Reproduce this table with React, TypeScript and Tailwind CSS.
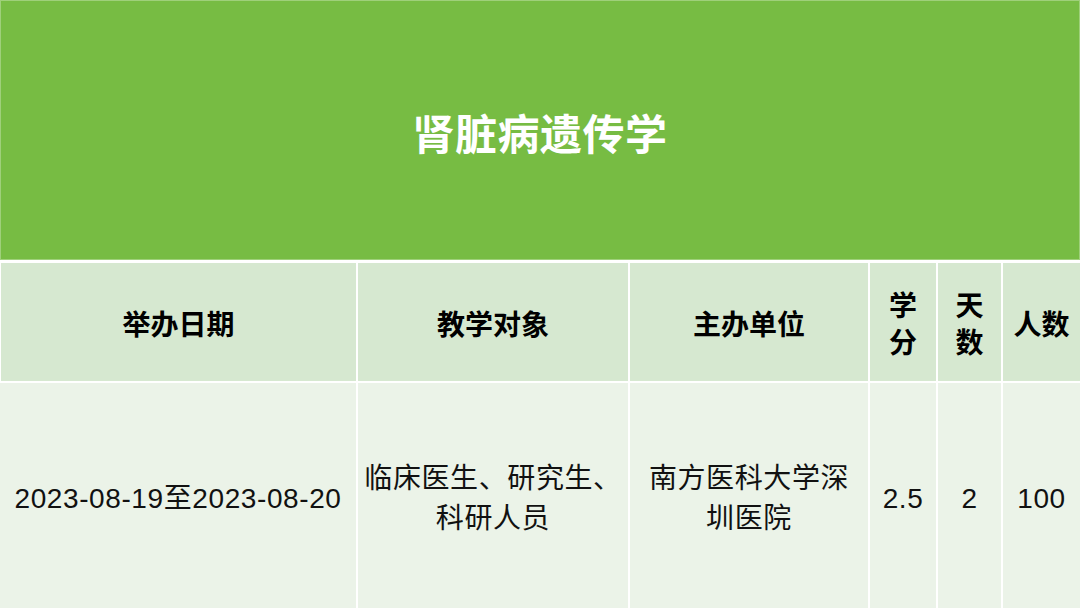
const font = { fontFamily: '"Liberation Sans", "Noto Sans CJK SC", sans-serif' }

const headers = ["举办日期", "教学对象", "主办单位", "学分", "天数", "人数"]
const row = [
  "2023-08-19至2023-08-20",
  "临床医生、研究生、科研人员",
  "南方医科大学深圳医院",
  "2.5",
  "2",
  "100",
]

export default function App() {
  return (
    <div
      className="w-[1080px] h-[608px] overflow-hidden bg-white flex flex-col"
      style={font}
    >
      {/* 标题 */}
      <div className="h-[260px] shrink-0 bg-[#77bc43] border-t border-l border-r border-b border-[#9fd07a] flex items-center justify-center">
        <h1 className="text-[42px] font-bold text-white tracking-[0.5px] mt-[10px]">
          肾脏病遗传学
        </h1>
      </div>

      {/* 表格 */}
      <div className="mt-[3px] flex-1 grid grid-cols-[356px_270px_238px_66px_63px_77px] grid-rows-[118px_1fr] gap-[2px] bg-white">
        {headers.map((h, i) => (
          <div
            key={h}
            className={
              "bg-[#d6e8d0] flex items-center justify-center text-center px-[6px] pt-[6px] text-[28px] font-bold text-black leading-[37px] " +
              (i === 0 ? "border-l border-white" : "")
            }
          >
            {h}
          </div>
        ))}
        {row.map((c, i) => (
          <div
            key={i}
            className={
              "bg-[#ebf3e8] flex items-center justify-center text-center pt-[6px] text-[28px] text-[#111] leading-[40px] tracking-[0.6px] " +
              (i === 1 ? "px-[2px]" : "px-[8px]")
            }
          >
            {c}
          </div>
        ))}
      </div>
    </div>
  )
}
